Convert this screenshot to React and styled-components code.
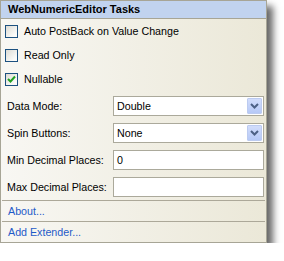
import React from "react";
import styled, { createGlobalStyle } from "styled-components";

const GlobalStyle = createGlobalStyle`
  html, body {
    margin: 0;
    padding: 0;
    background: #ffffff;
  }
  body {
    font-family: "Liberation Sans", Arial, sans-serif;
  }
`;

const Panel = styled.div`
  width: 265px;
  border: 1px solid #a7a596;
  background: linear-gradient(to right, #f8f7f3, #ebe8d8);
  box-shadow: 6px 6px 7px rgba(0, 0, 0, 0.6);
  font-size: 10.7px;
  color: #000;
`;

const Header = styled.div`
  height: 17px;
  line-height: 17px;
  padding-left: 7px;
  background: #c1d3ef;
  border-bottom: 1px solid #a7a596;
  font-weight: bold;
  font-size: 11px;
`;

const CheckRow = styled.label`
  display: flex;
  align-items: center;
  gap: 6px;
  height: 24px;
  padding-left: 4px;
`;

const Box = styled.span`
  width: 11px;
  height: 11px;
  border: 1px solid #1c5180;
  background: linear-gradient(135deg, #dcdbd4, #fbfbf9 80%);
  display: flex;
  align-items: center;
  justify-content: center;
`;

const Fields = styled.div`
  margin-top: 1px;
`;

const FieldRow = styled.div`
  display: flex;
  align-items: center;
  height: 27px;
  padding: 0 2px 0 6px;
`;

const Label = styled.span`
  width: 106px;
`;

const Input = styled.div`
  flex: 1;
  height: 18px;
  border: 1px solid #aba99b;
  background: #fff;
  display: flex;
  align-items: center;
  padding: 0 1px 0 3px;
`;

const Value = styled.span`
  flex: 1;
`;

const DropButton = styled.span`
  width: 13px;
  height: 14px;
  border: 1px solid #bccbf0;
  border-radius: 1px;
  background: linear-gradient(#d2ddfb, #b6c9f7);
  display: flex;
  align-items: center;
  justify-content: center;
`;

const Separator = styled.div`
  height: 1px;
  margin: 0 1px;
  background: #aca899;
`;

const LinkRow = styled.div`
  height: 20px;
  display: flex;
  align-items: center;
  padding-left: 7px;
  color: #1f5bc8;
`;

const Check = ({ checked, children }) => (
  <CheckRow>
    <Box>
      {checked && (
        <svg width="9" height="9" viewBox="0 0 9 9">
          <path d="M1 4 L3.5 6.5 L8 1.5" fill="none" stroke="#21a121" strokeWidth="2" />
        </svg>
      )}
    </Box>
    {children}
  </CheckRow>
);

const Field = ({ label, value, dropdown }) => (
  <FieldRow>
    <Label>{label}</Label>
    <Input>
      <Value>{value}</Value>
      {dropdown && (
        <DropButton>
          <svg width="9" height="6" viewBox="0 0 9 6">
            <path d="M1 1 L4.5 4.5 L8 1" fill="none" stroke="#4d6185" strokeWidth="2" />
          </svg>
        </DropButton>
      )}
    </Input>
  </FieldRow>
);

export default function App() {
  return (
    <>
      <GlobalStyle />
      <Panel>
        <Header>WebNumericEditor Tasks</Header>
        <Check>Auto PostBack on Value Change</Check>
        <Check>Read Only</Check>
        <Check checked>Nullable</Check>
        <Fields>
          <Field label="Data Mode:" value="Double" dropdown />
          <Field label="Spin Buttons:" value="None" dropdown />
          <Field label="Min Decimal Places:" value="0" />
          <Field label="Max Decimal Places:" value="" />
        </Fields>
        <Separator />
        <LinkRow>About...</LinkRow>
        <Separator />
        <LinkRow>Add Extender...</LinkRow>
      </Panel>
    </>
  );
}
